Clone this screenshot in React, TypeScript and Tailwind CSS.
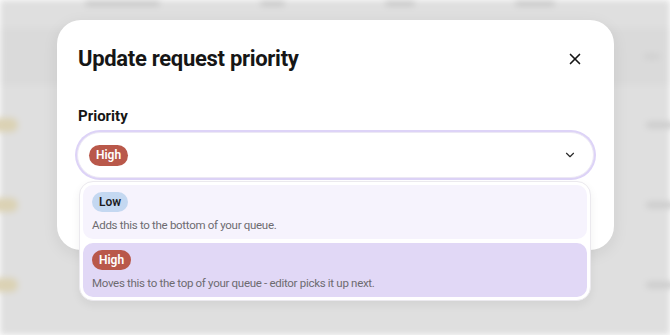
import { X, ChevronDown } from "lucide-react";

// ── Priority options ──────────────────────────────────────────────────────────

const OPTIONS = [
  {
    id: "low",
    label: "Low",
    hint: "Adds this to the bottom of your queue.",
    badge: "bg-[#c4d8f1] text-[#1d1d1f]",
    row: "bg-[#f6f3fd]",
  },
  {
    id: "high",
    label: "High",
    hint: "Moves this to the top of your queue - editor picks it up next.",
    badge: "bg-[#b9584a] text-white",
    row: "bg-[#e1d8f6]",
  },
];

function Badge({ label, className }: { label: string; className: string }) {
  return (
    <span className={`inline-flex h-[20px] items-center rounded-full px-[7px] text-[12px] font-semibold leading-none ${className}`}>
      {label}
    </span>
  );
}

// ── Blurred page behind the modal ─────────────────────────────────────────────

function BackgroundPage() {
  return (
    <div className="flex h-full w-full flex-col bg-[#dfdfdf] blur-[3px]">
      <div className="flex h-[28px] shrink-0 items-start gap-[100px] pl-[85px]">
        <div className="h-[6px] w-[75px] rounded bg-[#c6c6c6]" />
        <div className="h-[6px] w-[25px] rounded bg-[#c6c6c6]" />
        <div className="h-[6px] w-[30px] rounded bg-[#c6c6c6]" />
        <div className="h-[6px] w-[40px] rounded bg-[#c6c6c6]" />
      </div>
      <div className="flex h-[57px] shrink-0 items-center justify-end bg-[#dadada] pr-[10px]">
        <div className="h-[5px] w-[16px] rounded bg-[#cecece]" />
      </div>
      {[0, 1, 2].map((i) => (
        <div key={i} className="flex h-[80px] shrink-0 items-center justify-between">
          <div className="ml-[-8px] h-[14px] w-[26px] rounded-full bg-[#dbd2b4]" />
          <div className="mr-[-6px] h-[6px] w-[30px] rounded bg-[#cacaca]" />
        </div>
      ))}
    </div>
  );
}

// ── Main ──────────────────────────────────────────────────────────────────────

export default function App() {
  return (
    <div className="relative h-[335px] w-[670px] overflow-hidden font-['Roboto',sans-serif]">
      <BackgroundPage />

      <div className="absolute inset-0 pl-[57px] pt-[20px]">
        <div className="relative w-[557px] rounded-[24px] bg-white px-[20px] pb-[72px] pt-[24px] shadow-[0_4px_16px_rgba(0,0,0,0.08)]">
          <div className="flex items-center justify-between pl-[1px]">
            <h2 className="text-[22px] font-bold leading-[30px] tracking-[-0.3px] text-[#161616]">
              Update request priority
            </h2>
            <button className="mr-[7px] flex h-[24px] w-[24px] items-center justify-center text-[#161616]">
              <X size={18} strokeWidth={2.2} />
            </button>
          </div>

          <div className="mt-[32px] pl-[1px] text-[15px] font-bold leading-[20px] text-[#161616]">Priority</div>

          <div className="relative mt-[6px]">
            <div className="flex h-[46px] items-center justify-between rounded-full border border-[#ece8f4] bg-white pl-[11px] pr-[16px] shadow-[0_0_0_2px_#ddd3f7]">
              <Badge label="High" className="h-[21px] bg-[#b9584a] text-white" />
              <ChevronDown size={14} strokeWidth={2} className="text-[#2a2a2a]" />
            </div>

            <div className="absolute left-[2px] right-[3px] top-[49px] flex flex-col gap-[4px] rounded-[14px] border border-[#ebe9ee] bg-white p-[3px] shadow-[0_4px_10px_rgba(0,0,0,0.06)]">
              {OPTIONS.map((o) => (
                <div key={o.id} className={`flex h-[54px] flex-col justify-center gap-[5px] rounded-[10px] px-[9px] ${o.row}`}>
                  <div className="flex">
                    <Badge label={o.label} className={o.badge} />
                  </div>
                  <div className="text-[11.5px] leading-[16px] tracking-[-0.3px] text-[#6d6b70]">{o.hint}</div>
                </div>
              ))}
            </div>
          </div>
        </div>
      </div>
    </div>
  );
}
